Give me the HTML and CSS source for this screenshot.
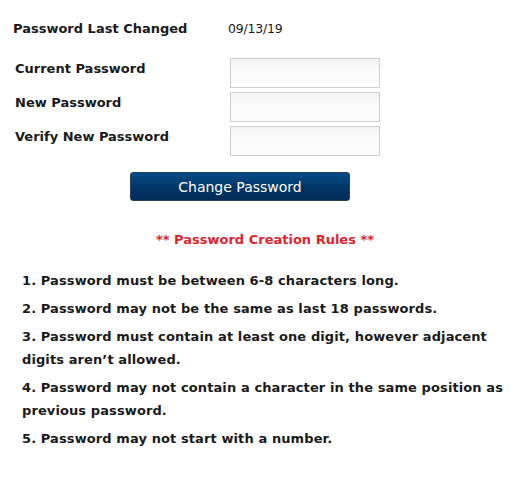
FILE: index.html
```html
<!DOCTYPE html>
<html>
<head>
<meta charset="utf-8">
<link rel="stylesheet" href="styles.css">
</head>
<body>
<div class="page">
  <div class="last-changed">
    <span class="lc-label">Password Last Changed</span>
    <span class="lc-date">09/13/19</span>
  </div>
  <div class="form">
    <div class="row"><label class="label">Current Password</label><input class="field" type="password"></div>
    <div class="row"><label class="label">New Password</label><input class="field" type="password"></div>
    <div class="row"><label class="label">Verify New Password</label><input class="field" type="password"></div>
  </div>
  <div class="actions"><button class="btn">Change Password</button></div>
  <div class="rules-title">** Password Creation Rules **</div>
  <ol class="rules">
    <li>1. Password must be between 6-8 characters long.</li>
    <li>2. Password may not be the same as last 18 passwords.</li>
    <li>3. Password must contain at least one digit, however adjacent digits aren’t allowed.</li>
    <li>4. Password may not contain a character in the same position as previous password.</li>
    <li>5. Password may not start with a number.</li>
  </ol>
</div>
</body>
</html>
```

FILE: styles.css
```css
* { box-sizing: border-box; }
body {
  margin: 0;
  background: #fff;
  font-family: "DejaVu Sans", Verdana, sans-serif;
  color: #1a1a1a;
}
.page {
  padding: 18px 0 0 0;
  width: 525px;
}
.last-changed {
  display: flex;
  align-items: center;
  padding-left: 13px;
  height: 20px;
}
.lc-label {
  font-weight: bold;
  font-size: 13px;
  width: 215px;
}
.lc-date {
  font-size: 12.5px;
  letter-spacing: -0.2px;
}
.form {
  display: flex;
  flex-direction: column;
  gap: 4px;
  margin-top: 20px;
  padding-left: 15px;
}
.row {
  display: flex;
  align-items: flex-start;
  height: 30px;
}
.label {
  width: 215px;
  font-weight: bold;
  font-size: 13px;
  line-height: 22px;
}
.field {
  width: 150px;
  height: 30px;
  border: 1px solid #cfcfcf;
  background: linear-gradient(#f2f2f2, #fbfbfb 40%, #fcfcfc);
  margin: 0;
  padding: 0;
  outline: none;
}
.actions {
  padding-left: 130px;
  margin-top: 16px;
}
.btn {
  width: 220px;
  height: 29px;
  border: 1px solid #2a3f5a;
  border-radius: 3px;
  background: linear-gradient(#034b86, #013465 60%, #012c58);
  color: #fff;
  font-family: "DejaVu Sans", Verdana, sans-serif;
  font-size: 14px;
  padding: 0;
}
.rules-title {
  margin-top: 31px;
  text-align: center;
  padding-left: 5px;
  color: #e0232d;
  font-weight: bold;
  font-size: 13px;
}
.rules {
  list-style: none;
  margin: 22px 0 0 0;
  padding: 0 14px 0 22px;
}
.rules li {
  font-weight: bold;
  font-size: 13px;
  letter-spacing: 0.1px;
  line-height: 23px;
  margin-bottom: 5px;
}
```
